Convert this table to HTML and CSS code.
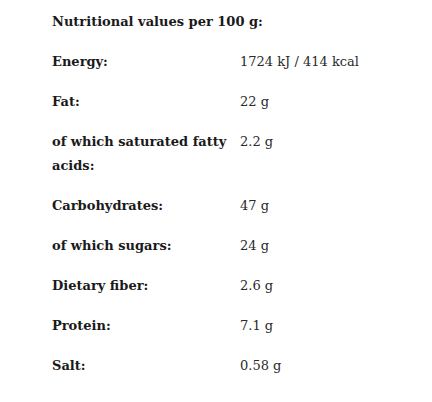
FILE: index.html
```html
<!DOCTYPE html>
<html lang="en">
<head>
    <meta charset="UTF-8">
    <title>Nutritional values</title>
    <link rel="stylesheet" href="styles.css">
</head>
<body>
    <div class="nutrition">
        <h3 class="nutrition-title">Nutritional values per 100 g:</h3>
        <div class="nutrition-table">
            <div class="row"><span class="label">Energy:</span><span class="value">1724 kJ / 414 kcal</span></div>
            <div class="row"><span class="label">Fat:</span><span class="value">22 g</span></div>
            <div class="row"><span class="label">of which saturated fatty acids:</span><span class="value">2.2 g</span></div>
            <div class="row"><span class="label">Carbohydrates:</span><span class="value">47 g</span></div>
            <div class="row"><span class="label">of which sugars:</span><span class="value">24 g</span></div>
            <div class="row"><span class="label">Dietary fiber:</span><span class="value">2.6 g</span></div>
            <div class="row"><span class="label">Protein:</span><span class="value">7.1 g</span></div>
            <div class="row"><span class="label">Salt:</span><span class="value">0.58 g</span></div>
        </div>
    </div>
</body>
</html>
```

FILE: styles.css
```css
* {
    margin: 0;
    padding: 0;
    box-sizing: border-box;
}

body {
    font-family: "DejaVu Serif", serif;
    font-size: 13px;
    line-height: 24px;
    color: #1a1a1a;
    background-color: #fff;
}

.nutrition {
    padding: 2px 0 0 52px;
}

.nutrition-title {
    font-size: 13px;
    font-weight: bold;
    padding: 8px 0;
}

.nutrition-table .row {
    display: grid;
    grid-template-columns: 188px 1fr;
    padding: 8px 0;
}

.label {
    font-weight: bold;
    padding-right: 12px;
}

.value {
    color: #2a2a2a;
}
```
